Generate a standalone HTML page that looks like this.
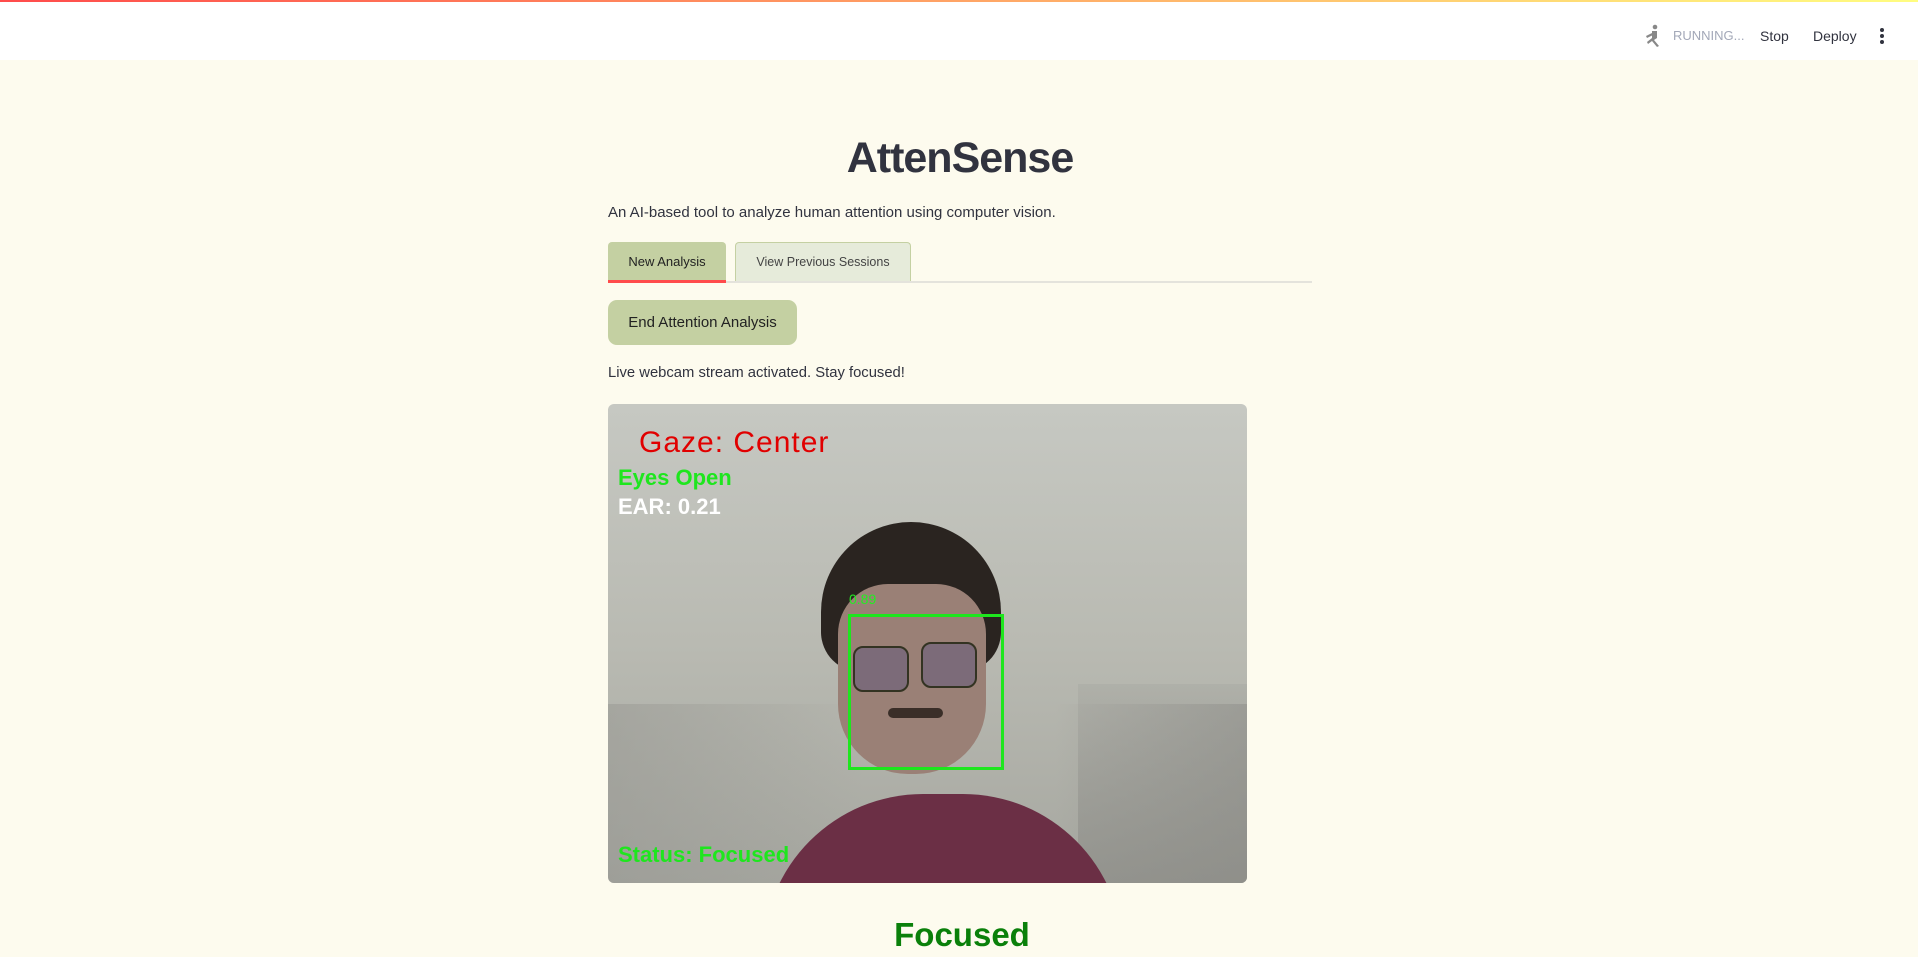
<!DOCTYPE html>
<html><head><meta charset="utf-8"><style>
*{margin:0;padding:0;box-sizing:border-box}
body{width:1918px;height:957px;overflow:hidden;background:#fdfbee;font-family:"Liberation Sans",sans-serif;color:#31333f;position:relative}
.top{position:absolute;left:0;top:0;width:1918px;height:60px;background:#fff}
.bar{position:absolute;left:0;top:0;width:1918px;height:2px;background:linear-gradient(90deg,#ff4b4b,#fffd80)}
.abs{position:absolute;white-space:nowrap}
</style></head><body>
<div class="top"><div class="bar"></div>
<svg class="abs" style="left:1644px;top:24px" width="18" height="24" viewBox="0 0 18 24"><circle cx="11" cy="3" r="2.3" fill="#888"/><path d="M8 7h5v7l-3 2 5 6-2 1-5-6-4 3-1-2 5-4z M2 12l6-3 1 2-6 3z" fill="#888"/></svg>
<div class="abs" style="left:1673px;top:28px;font-size:13px;color:#a3a8b8">RUNNING...</div>
<div class="abs" style="left:1760px;top:28px;font-size:14px">Stop</div>
<div class="abs" style="left:1813px;top:28px;font-size:14px">Deploy</div>
<div class="abs" style="left:1880px;top:28px;width:4px;height:16px"><div style="width:4px;height:4px;border-radius:2px;background:#31333f;margin-bottom:2px"></div><div style="width:4px;height:4px;border-radius:2px;background:#31333f;margin-bottom:2px"></div><div style="width:4px;height:4px;border-radius:2px;background:#31333f"></div></div>
</div>
<div class="abs" style="left:608px;width:704px;top:134px;text-align:center;font-size:43px;font-weight:bold;color:#31333f;letter-spacing:-1px">AttenSense</div>
<div class="abs" style="left:608px;top:204px;font-size:15px">An AI-based tool to analyze human attention using computer vision.</div>
<div class="abs" style="left:608px;top:281px;width:704px;height:2px;background:#e4e3dc"></div>
<div class="abs" style="left:608px;top:242px;width:118px;height:40px;background:#c4d0a2;border-radius:4px 4px 0 0;font-size:13px;text-align:center;line-height:40px;color:#222">New Analysis</div>
<div class="abs" style="left:608px;top:280px;width:118px;height:3px;background:#ff4b4b"></div>
<div class="abs" style="left:735px;top:242px;width:176px;height:39px;background:#e6ebda;border:1px solid #c4d0a2;border-bottom:none;border-radius:4px 4px 0 0;font-size:12.5px;text-align:center;line-height:39px;color:#444">View Previous Sessions</div>
<div class="abs" style="left:608px;top:300px;width:189px;height:45px;background:#c4d0a2;border-radius:9px;font-size:15px;text-align:center;line-height:45px;color:#222">End Attention Analysis</div>
<div class="abs" style="left:608px;top:365px;font-size:14.8px">Live webcam stream activated. Stay focused!</div>
<div class="abs" style="left:608px;top:404px;width:639px;height:479px;border-radius:6px;overflow:hidden;background:linear-gradient(180deg,#c6c8c2 0%,#b9bab2 50%,#a6a7a0 100%)">
 <div class="abs" style="left:0;top:300px;width:639px;height:179px;background:linear-gradient(90deg,rgba(150,150,145,.5),transparent 40%,transparent 70%,rgba(140,140,135,.6))"></div>
 <div class="abs" style="left:470px;top:280px;width:169px;height:199px;background:linear-gradient(180deg,rgba(160,160,155,.3),rgba(140,140,135,.7))"></div>
 <div class="abs" style="left:155px;top:390px;width:360px;height:160px;background:#6b2f45;border-radius:160px 160px 0 0"></div>
 <div class="abs" style="left:213px;top:118px;width:180px;height:150px;background:#2a2420;border-radius:90px 90px 40px 40px"></div>
 <div class="abs" style="left:230px;top:180px;width:148px;height:190px;background:#9a8076;border-radius:50px 50px 70px 70px"></div>
 <div class="abs" style="left:245px;top:242px;width:56px;height:46px;border:2px solid #332;border-radius:10px;background:rgba(70,70,130,.35)"></div>
 <div class="abs" style="left:313px;top:238px;width:56px;height:46px;border:2px solid #332;border-radius:10px;background:rgba(70,70,130,.35)"></div>
 <div class="abs" style="left:280px;top:304px;width:55px;height:10px;background:#3a2e28;border-radius:10px"></div>
 <div class="abs" style="left:240px;top:210px;width:156px;height:156px;border:3px solid #1ee61e"></div>
 <div class="abs" style="left:241px;top:187px;font-size:14px;color:#2e2">0.89</div>
 <div class="abs" style="left:31px;top:22px;font-size:30px;color:#e10000;letter-spacing:1px">Gaze: Center</div>
 <div class="abs" style="left:10px;top:61px;font-size:22px;color:#1ee61e;font-weight:bold">Eyes Open</div>
 <div class="abs" style="left:10px;top:90px;font-size:22px;color:#fff;font-weight:bold">EAR: 0.21</div>
 <div class="abs" style="left:10px;top:438px;font-size:22px;color:#1ee61e;font-weight:bold">Status: Focused</div>
</div>
<div class="abs" style="left:608px;width:704px;top:916px;text-align:center;font-size:33px;font-weight:bold;color:#0a800a;padding-left:4px">Focused</div>
</body></html>
